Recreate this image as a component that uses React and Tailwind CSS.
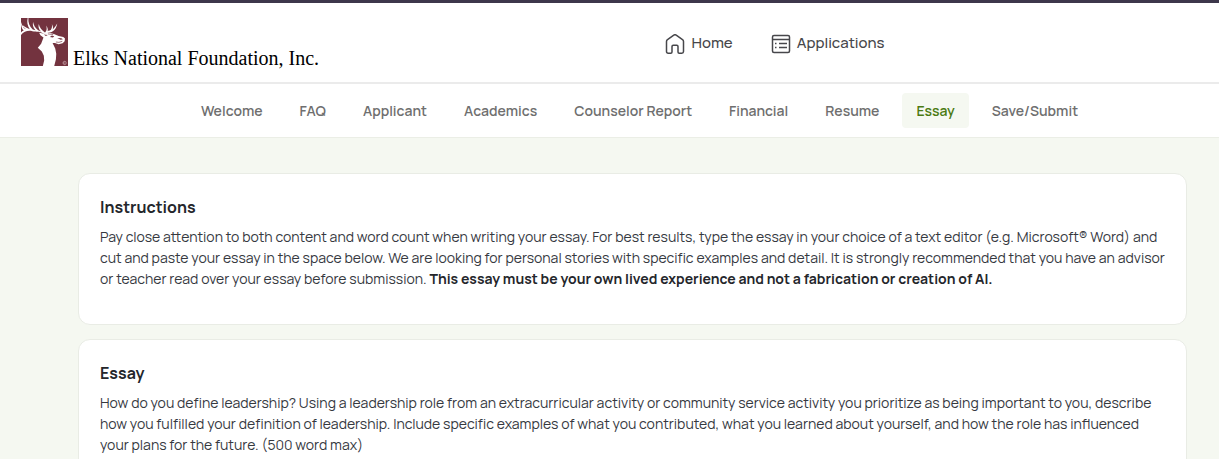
import React, { useState } from "react";

const steps = [
  "Welcome",
  "FAQ",
  "Applicant",
  "Academics",
  "Counselor Report",
  "Financial",
  "Resume",
  "Essay",
  "Save/Submit",
];

function ElkLogo() {
  return (
    <svg className="w-[47px] h-12 shrink-0" viewBox="0 0 140 142" preserveAspectRatio="none" aria-hidden="true">
      <rect width="140" height="142" fill="#73333f" />
      {/* head and neck */}
      <path
        d="M54 44 L66 46 L84 44 L98 47 L112 53 L126 56 L131 61 L130 69 L124 75 L112 78 L101 74 L94 74 L102 90 L105 106 L104 122 L99 142 L65 142 L69 126 L68 112 L62 99 L50 88 L60 76 L67 58 L58 51 Z"
        fill="#fff"
      />
      {/* antlers */}
      <g fill="#fff">
        <path d="M70 48 C58 38 46 42 34 39 C20 36 9 40 0 50 L0 43 C2 40 5 38 8 37 C2 32 0 24 0 12 L4 22 C7 28 10 32 15 33 L4 24 L6 22 C14 27 20 31 26 33 C19 22 17 12 20 0 L22 0 C21 13 25 25 35 34 L43 36 C36 29 34 21 36 12 C38 22 43 31 51 36 L60 40 C52 33 51 26 53 18 C55 29 62 36 72 44 Z" />
        <path d="M70 45 C74 40 80 38 86 37 C94 35 101 29 108 16 C105 31 99 38 89 42 C82 44 78 43 74 47 Z" />
        <path d="M86 39 C93 32 93 25 92 18 C97 27 96 34 92 39 Z" />
        <path d="M72 43 C78 36 77 28 75 22 C81 30 81 37 78 42 Z" />
      </g>
      {/* ear, eye and muzzle */}
      <path d="M68 49 L80 50 L74 53 Z M86 56 L92 52 L99 54 L95 58 Z M108 59 L120 60 L125 63 L118 64 Z" fill="#73333f" />
      <path d="M104 71 L113 72 L123 69 M80 47 L96 49" fill="none" stroke="#73333f" strokeWidth="2" />
      <circle cx="130" cy="133" r="5" fill="none" stroke="#d9bcc1" strokeWidth="1.5" />
      <path d="M132 131 A3 3 0 1 0 132 135" fill="none" stroke="#d9bcc1" strokeWidth="1.5" />
    </svg>
  );
}

function HomeIcon() {
  return (
    <svg className="w-5 h-5" viewBox="0 0 20 20" fill="none" stroke="#47474b" strokeWidth="1.5" strokeLinejoin="round" aria-hidden="true">
      <path d="M1.5 7.5 Q1.5 6.3 2.5 5.6 L8.8 1.1 Q10 .3 11.2 1.1 L17.5 5.6 Q18.5 6.3 18.5 7.5 V17.5 Q18.5 19.2 16.8 19.2 H14.2 Q13 19.2 13 18 V12.5 Q13 11.3 11.8 11.3 H8.2 Q7 11.3 7 12.5 V18 Q7 19.2 5.8 19.2 H3.2 Q1.5 19.2 1.5 17.5 Z" />
    </svg>
  );
}

function ApplicationsIcon() {
  return (
    <svg className="w-5 h-5" viewBox="0 0 20 20" fill="none" stroke="#47474b" strokeWidth="1.5" aria-hidden="true">
      <rect x="1.5" y="1.5" width="17" height="17" rx="1.5" />
      <path d="M1.5 5.5 H18.5 M4 9.5 H5.5 M8 9.5 H16 M4 13.5 H5.5 M8 13.5 H16" />
    </svg>
  );
}

function Card({ title, children }) {
  return (
    <section className="bg-white border border-[#e9ece5] rounded-xl px-[21px] pt-[19px] pb-[35px]">
      <h2 className="text-base leading-7 font-bold">{title}</h2>
      <p className="mt-[5px] text-sm leading-[21px] text-[#36393f]">{children}</p>
    </section>
  );
}

export default function App() {
  const [active, setActive] = useState("Essay");

  return (
    <div className="min-h-screen bg-[#f5f8f1] text-[#24262b] font-['Manrope','Inter',sans-serif]">
      <header className="flex items-center h-[84px] bg-white border-t-3 border-t-[#3d374b] border-b-2 border-b-[#ebebeb] pl-[21px] pb-0.5">
        <a href="#" className="flex items-end gap-[5px]">
          <ElkLogo />
          <span className="font-['Liberation_Serif',serif] text-xl leading-4 text-black whitespace-nowrap">
            Elks National Foundation, Inc.
          </span>
        </a>
        <nav className="flex-1 flex justify-center gap-[38px] pt-1 pl-3 text-[15px] font-medium text-[#47474b]">
          <a href="#home" className="flex items-center gap-1.5">
            <HomeIcon />
            Home
          </a>
          <a href="#applications" className="flex items-center gap-1.5">
            <ApplicationsIcon />
            Applications
          </a>
        </nav>
      </header>

      <nav className="flex justify-center gap-[9px] bg-white border-b border-[#ebeee6] py-[9px] pl-[60px]">
        {steps.map((step) => (
          <button
            key={step}
            type="button"
            onClick={() => setActive(step)}
            className={`h-[35px] px-3.5 rounded-sm text-sm font-semibold whitespace-nowrap ${
              active === step ? "bg-[#f5f8f1] text-[#4b7a12]" : "text-[#6f6f6f]"
            }`}
          >
            {step}
          </button>
        ))}
      </nav>

      <main className="flex flex-col gap-3.5 pt-[35px] pl-[78px] pr-8">
        <Card title="Instructions">
          Pay close attention to both content and word count when writing your essay. For best results, type the
          essay in your choice of a text editor (e.g. Microsoft® Word) and cut and paste your essay in the space
          below. We are looking for personal stories with specific examples and detail. It is strongly recommended
          that you have an advisor or teacher read over your essay before submission.{" "}
          <strong className="font-bold text-[#24262b]">
            This essay must be your own lived experience and not a fabrication or creation of AI.
          </strong>
        </Card>
        <Card title="Essay">
          How do you define leadership? Using a leadership role from an extracurricular activity or community
          service activity you prioritize as being important to you, describe how you fulfilled your definition of
          leadership. Include specific examples of what you contributed, what you learned about yourself, and how
          the role has influenced your plans for the future. (500 word max)
        </Card>
      </main>
    </div>
  );
}
